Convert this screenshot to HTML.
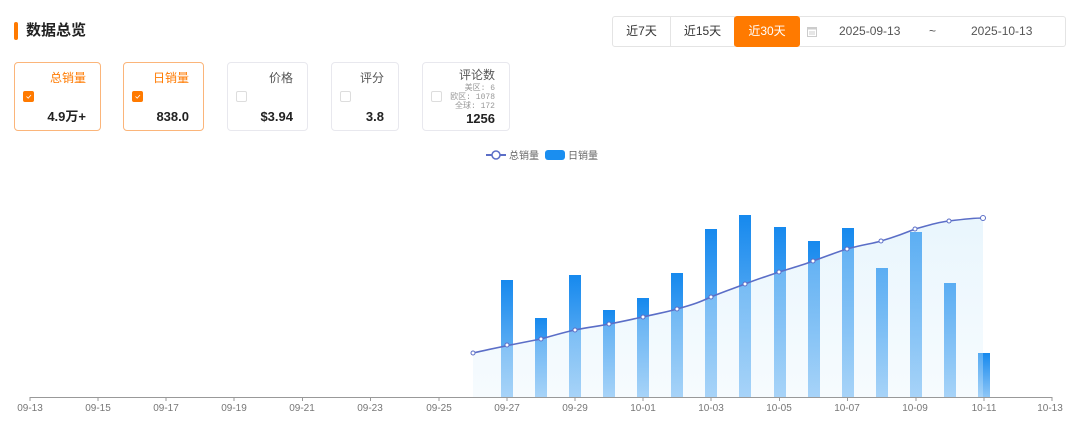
<!DOCTYPE html>
<html><head><meta charset="utf-8"><style>
*{margin:0;padding:0;box-sizing:border-box}
body{width:1080px;height:423px;background:#fff;font-family:"Liberation Sans","Noto Sans CJK SC",sans-serif;position:relative;overflow:hidden;color:#333}
.abs{position:absolute}
.bar{left:14px;top:22px;width:4px;height:18px;background:#ff7a00;border-radius:2px}
.title{left:26px;top:21px;font-size:15px;font-weight:bold;color:#222;line-height:20px}
.btn{top:16px;height:31px;border:1px solid #e4e4e4;font-size:12px;line-height:29px;text-align:center;color:#333;background:#fff}
.date{left:799px;top:16px;width:267px;height:31px;border:1px solid #e4e4e4;border-left:none;border-radius:0 3px 3px 0;font-size:12px;color:#555;line-height:29px}
.card{top:62px;height:69px;border:1px solid #e8e8ee;border-radius:4px;background:#fff}
.card.on{border-color:#fbb57a}
.card .t{position:absolute;right:14px;top:8px;font-size:12px;color:#555;line-height:15px}
.card.on .t{color:#ff7a00}
.card .v{position:absolute;right:14px;top:46px;font-size:13px;font-weight:bold;color:#222;line-height:15px}
.card .cb{position:absolute;left:8px;top:28px;width:11px;height:11px;border:1px solid #ddd;border-radius:2px;background:#fff}
.card.on .cb{background:#ff7a00;border-color:#ff7a00}
.card .cb svg{position:absolute;left:0px;top:0px}
.sub{position:absolute;right:14px;font-size:8px;color:#999;line-height:9px;font-family:"Liberation Mono","Noto Sans CJK SC",monospace}
</style></head><body>
<div class="abs bar"></div>
<div class="abs title">数据总览</div>

<div class="abs btn" style="left:612px;width:59px;border-radius:3px 0 0 3px">近7天</div>
<div class="abs btn" style="left:670px;width:65px">近15天</div>
<div class="abs btn" style="left:734px;width:66px;background:#ff7a00;border-color:#ff7a00;color:#fff;border-radius:3px">近30天</div>
<div class="abs date">
<svg class="abs" style="left:8px;top:9px" width="10" height="11" viewBox="0 0 10 11"><rect x="0.5" y="1.5" width="9" height="9" fill="none" stroke="#ccc"/><rect x="0.5" y="1.5" width="9" height="2" fill="#ccc"/><rect x="2" y="5" width="6" height="4" fill="#e6e6e6"/></svg>
<span class="abs" style="left:40px">2025-09-13</span>
<span class="abs" style="left:130px">~</span>
<span class="abs" style="left:172px">2025-10-13</span>
</div>

<div class="abs card on" style="left:14px;width:87px"><div class="t">总销量</div><div class="cb"><svg width="9" height="9"><path d="M2.5 4.5 L4.2 6.2 L7 3" stroke="#fff" fill="none" stroke-width="0.8"/></svg></div><div class="v">4.9万+</div></div>
<div class="abs card on" style="left:123px;width:81px"><div class="t">日销量</div><div class="cb"><svg width="9" height="9"><path d="M2.5 4.5 L4.2 6.2 L7 3" stroke="#fff" fill="none" stroke-width="0.8"/></svg></div><div class="v">838.0</div></div>
<div class="abs card" style="left:227px;width:81px"><div class="t">价格</div><div class="cb"></div><div class="v">$3.94</div></div>
<div class="abs card" style="left:331px;width:68px"><div class="t">评分</div><div class="cb"></div><div class="v">3.8</div></div>
<div class="abs card" style="left:422px;width:88px"><div class="t" style="top:5px">评论数</div><div class="cb"></div>
<div class="sub" style="top:21px">美区: 6</div><div class="sub" style="top:30px">欧区: 1078</div><div class="sub" style="top:39px">全球: 172</div>
<div class="v" style="top:48px">1256</div></div>

<svg class="abs" style="left:0;top:0" width="1080" height="423">
<defs>
<linearGradient id="bg" x1="0" y1="0" x2="0" y2="1"><stop offset="0" stop-color="#1689ee"/><stop offset="1" stop-color="#8ec6f6"/></linearGradient>
<linearGradient id="ag" x1="0" y1="0" x2="0" y2="1"><stop offset="0" stop-color="rgba(200,232,250,0.4)"/><stop offset="1" stop-color="rgba(225,242,252,0.3)"/></linearGradient>
</defs>
<line x1="486" y1="155" x2="506" y2="155" stroke="#5b6ec7" stroke-width="2"/>
<circle cx="496" cy="155" r="4" fill="#fff" stroke="#5b6ec7" stroke-width="1.5"/>
<text x="509" y="159" font-size="10" fill="#666">总销量</text>
<rect x="545" y="150" width="20" height="10" rx="3" fill="#1a8ef0"/>
<text x="568" y="159" font-size="10" fill="#666">日销量</text>
<g fill="url(#bg)">
<rect x="501" y="280" width="12" height="117"/>
<rect x="535" y="318" width="12" height="79"/>
<rect x="569" y="275" width="12" height="122"/>
<rect x="603" y="310" width="12" height="87"/>
<rect x="637" y="298" width="12" height="99"/>
<rect x="671" y="273" width="12" height="124"/>
<rect x="705" y="229" width="12" height="168"/>
<rect x="739" y="215" width="12" height="182"/>
<rect x="774" y="227" width="12" height="170"/>
<rect x="808" y="241" width="12" height="156"/>
<rect x="842" y="228" width="12" height="169"/>
<rect x="876" y="268" width="12" height="129"/>
<rect x="910" y="232" width="12" height="165"/>
<rect x="944" y="283" width="12" height="114"/>
<rect x="978" y="353" width="12" height="44"/>
</g>
<path d="M473 353 L507 345 L541 339 L575 330 L609 324 L643 317 L677 309 L711 297 L745 284 L779 272 L813 261 L847 249 L881 241 L915 229 L949 221 L983 218 L983 397 L473 397 Z" fill="url(#ag)"/>
<path d="M473 353 C490 349 520 343 541 339 C555 335 565 332 575 330 C590 327 600 326 609 324 C625 321 633 319 643 317 C660 313 667 312 677 309 C695 304 700 302 711 297 C725 291 735 288 745 284 C760 278 768 276 779 272 C795 267 803 265 813 261 C830 255 837 252 847 249 C865 244 871 244 881 241 C898 236 905 233 915 229 C930 225 938 222 949 221 C965 219 975 218 983 218" fill="none" stroke="#5b6ec7" stroke-width="1.6"/>
<g fill="#fff" stroke="#5b6ec7" stroke-width="1">
<circle cx="473" cy="353" r="2"/><circle cx="507" cy="345" r="2"/><circle cx="541" cy="339" r="2"/><circle cx="575" cy="330" r="2"/><circle cx="609" cy="324" r="2"/><circle cx="643" cy="317" r="2"/><circle cx="677" cy="309" r="2"/><circle cx="711" cy="297" r="2"/><circle cx="745" cy="284" r="2"/><circle cx="779" cy="272" r="2"/><circle cx="813" cy="261" r="2"/><circle cx="847" cy="249" r="2"/><circle cx="881" cy="241" r="2"/><circle cx="915" cy="229" r="2"/><circle cx="949" cy="221" r="2"/><circle cx="983" cy="218" r="2.5"/>
</g>
<line x1="30" y1="397.5" x2="1052" y2="397.5" stroke="#999" stroke-width="1"/>
<g stroke="#999">
<line x1="30" y1="397" x2="30" y2="401"/><line x1="98" y1="397" x2="98" y2="401"/><line x1="166" y1="397" x2="166" y2="401"/><line x1="234" y1="397" x2="234" y2="401"/><line x1="302.5" y1="397" x2="302.5" y2="401"/><line x1="370.5" y1="397" x2="370.5" y2="401"/><line x1="439" y1="397" x2="439" y2="401"/><line x1="507" y1="397" x2="507" y2="401"/><line x1="575" y1="397" x2="575" y2="401"/><line x1="643" y1="397" x2="643" y2="401"/><line x1="711" y1="397" x2="711" y2="401"/><line x1="779.5" y1="397" x2="779.5" y2="401"/><line x1="847.5" y1="397" x2="847.5" y2="401"/><line x1="916" y1="397" x2="916" y2="401"/><line x1="984" y1="397" x2="984" y2="401"/><line x1="1052" y1="397" x2="1052" y2="401"/>
</g>
<g font-size="10" fill="#777" text-anchor="middle">
<text x="30" y="411">09-13</text><text x="98" y="411">09-15</text><text x="166" y="411">09-17</text><text x="234" y="411">09-19</text><text x="302" y="411">09-21</text><text x="370" y="411">09-23</text><text x="439" y="411">09-25</text><text x="507" y="411">09-27</text><text x="575" y="411">09-29</text><text x="643" y="411">10-01</text><text x="711" y="411">10-03</text><text x="779" y="411">10-05</text><text x="847" y="411">10-07</text><text x="915" y="411">10-09</text><text x="984" y="411">10-11</text><text x="1050" y="411">10-13</text>
</g>
</svg>
</body></html>
